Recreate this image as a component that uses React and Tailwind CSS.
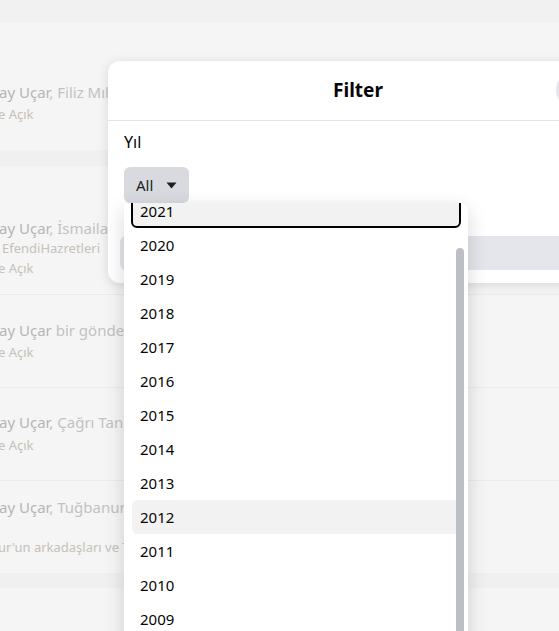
import React from 'react';

const years = [2021, 2020, 2019, 2018, 2017, 2016, 2015, 2014, 2013, 2012, 2011, 2010, 2009, 2008];

function FeedRow({ className, children }) {
  return <div className={`bg-[#f5f5f5] ${className}`}>{children}</div>;
}

function Name({ children, rest }) {
  return (
    <div className="text-[15px] leading-5 whitespace-nowrap -ml-[1px]">
      <span className="text-[#b5b5b5]">{children}</span>
      <span className="text-[#c2c2c2]">{rest}</span>
    </div>
  );
}

function Sub({ children, className = '' }) {
  return (
    <div className={`text-[13px] leading-[18px] text-[#c6c1b9] whitespace-nowrap -ml-[2px] ${className}`}>
      {children}
    </div>
  );
}

function Caret() {
  return (
    <svg width="11" height="7" viewBox="0 0 11 7" className="fill-[#1c1e21]">
      <path d="M0.5 0.5h10L5.5 6.5z" />
    </svg>
  );
}

export default function App() {
  return (
    <div className="relative w-[559px] h-[631px] overflow-hidden bg-[#f5f5f5] font-['Noto_Sans','Liberation_Sans',sans-serif]">
      {/* feed behind the dialog */}
      <div className="h-[22px] bg-[#f1f1f1]" />
      <FeedRow className="h-[128px] pt-[60px]">
        <Name rest=", Filiz Mıhçı ve 2 kişi daha">ay Uçar</Name>
        <Sub className="mt-[3px]">e Açık</Sub>
      </FeedRow>
      <div className="h-[16px] bg-[#f0f0f0]" />
      <FeedRow className="h-[129px] pt-[52px] border-b border-[#ebebeb]">
        <Name rest=", İsmailağa Cemaati ile birlikte">ay Uçar</Name>
        <Sub className="mt-[1px] ml-[2px]">EfendiHazretleri</Sub>
        <Sub className="mt-[2px]">e Açık</Sub>
      </FeedRow>
      <FeedRow className="h-[93px] pt-[25px] border-b border-[#ebebeb]">
        <Name rest=" bir gönderi paylaştı">ay Uçar</Name>
        <Sub className="mt-[3px]">e Açık</Sub>
      </FeedRow>
      <FeedRow className="h-[93px] pt-[24px] border-b border-[#ebebeb]">
        <Name rest=", Çağrı Taner ile birlikte">ay Uçar</Name>
        <Sub className="mt-[4px]">e Açık</Sub>
      </FeedRow>
      <FeedRow className="h-[92px] pt-[16px]">
        <Name rest=", Tuğbanur Yılmaz ile birlikte">ay Uçar</Name>
        <Sub className="mt-[21px]">ur'un arkadaşları ve Tuğbanur</Sub>
      </FeedRow>
      <div className="h-[15px] bg-[#f0f0f0]" />

      {/* filter dialog */}
      <div className="absolute left-[108px] top-[61px] w-[500px] rounded-xl bg-white shadow-[0_2px_12px_rgba(0,0,0,0.12)]">
        <div className="relative h-[60px] flex items-center justify-center border-b border-[#e4e4e4]">
          <span className="text-[19px] font-bold text-[#050505]">Filter</span>
          <div className="absolute right-[16px] top-[11px] w-9 h-9 rounded-full bg-[#e4e6eb]" />
        </div>
        <div className="relative pt-[11px] pb-[13px]">
          <div className="px-4 text-[16px] leading-5 text-[#050505]">Yıl</div>
          <div className="px-4 mt-[15px]">
            <button className="h-9 px-3 rounded-md bg-[#d8dadf] flex items-center gap-[13px] text-[15px] text-[#1c1e21]">
              <span>All</span>
              <Caret />
            </button>
          </div>
          <div className="mx-3 mt-[33px] h-[34px] rounded-md bg-[#e4e6eb]" />

          {/* open year menu */}
          <div className="absolute left-4 top-[82px] w-[344px] h-[440px] overflow-hidden rounded-lg rounded-tl-none bg-white shadow-[0_6px_20px_rgba(0,0,0,0.16)]">
            <div className="-mt-[9px] pl-[7px] pr-[7px]">
              {years.map((y) => {
                if (y === 2021) {
                  return (
                    <div key={y} className="h-[34px] px-[7px] flex items-center rounded-md border-2 border-black bg-[#f2f2f2] text-[15px] text-[#050505]">
                      {y}
                    </div>
                  );
                }
                return (
                  <div
                    key={y}
                    className={`h-[34px] mx-[1px] px-2 flex items-center rounded-md text-[15px] text-[#050505] ${y === 2012 ? 'bg-[#f2f2f2]' : ''}`}
                  >
                    {y}
                  </div>
                );
              })}
            </div>
            <div className="absolute left-[332px] top-[45px] w-2 h-[420px] rounded-full bg-[#bcc0c4]" />
          </div>
        </div>
      </div>
    </div>
  );
}
